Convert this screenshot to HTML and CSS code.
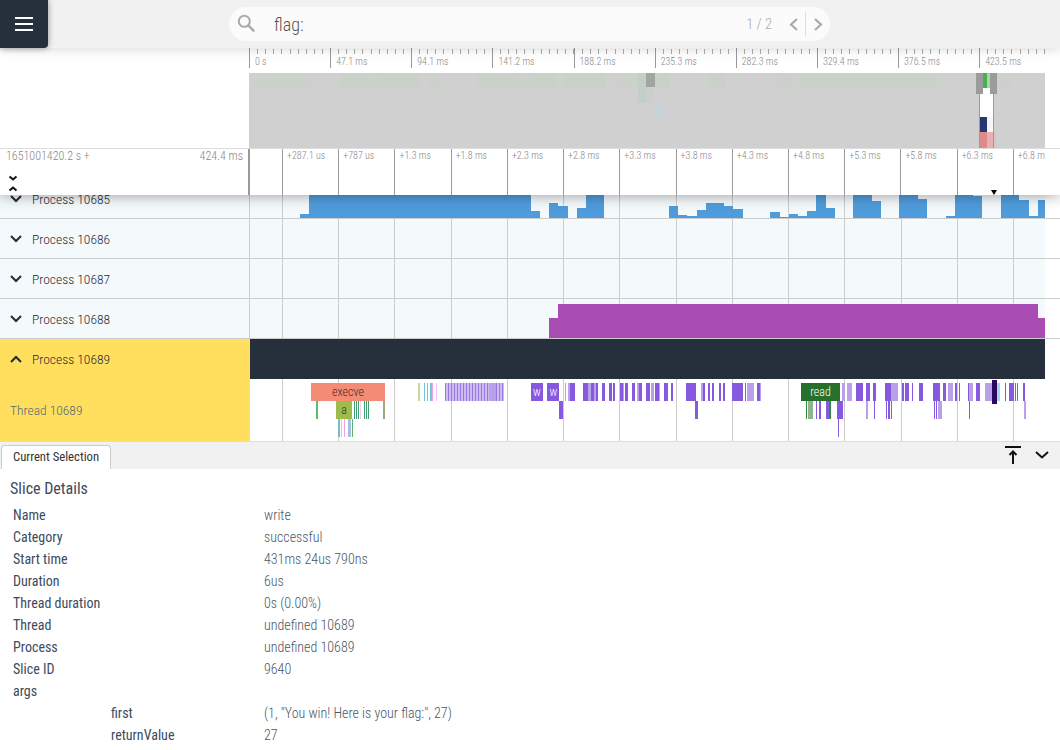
FILE: index.html
```html
<!DOCTYPE html>
<html lang="en">
<head>
	<meta charset="UTF-8">
	<title>Perfetto UI</title>
	<link rel="stylesheet" href="styles.css">
</head>
<body>
	<div class="topbar">
		<div class="menu-btn">
			<svg width="18" height="14" viewBox="0 0 18 14"><path d="M0 1h18M0 7h18M0 13h18" stroke="#fff" stroke-width="2"/></svg>
		</div>
		<div class="search">
			<svg class="search-icon" width="20" height="20" viewBox="0 0 20 20"><circle cx="7.300" cy="7.300" r="5.500" fill="none" stroke="#aaa" stroke-width="2"/><path d="M11.300 11.300l6 6" stroke="#aaa" stroke-width="2.400"/></svg>
			<span class="search-text">flag:</span>
			<span class="search-count">1 / 2</span>
			<svg class="search-nav" width="42" height="24" viewBox="0 0 42 24"><path d="M11 7l-6 5.500 6 5.500" fill="none" stroke="#aaa" stroke-width="2.200"/><path d="M19.500 0v24" stroke="#ddd"/><path d="M29 7l6 5.500-6 5.500" fill="none" stroke="#aaa" stroke-width="2.200"/></svg>
		</div>
	</div>

	<div class="overview">
		<div class="ruler">
			<div class="ruler-cell">0 s</div>
			<div class="ruler-cell">47.1 ms</div>
			<div class="ruler-cell">94.1 ms</div>
			<div class="ruler-cell">141.2 ms</div>
			<div class="ruler-cell">188.2 ms</div>
			<div class="ruler-cell">235.3 ms</div>
			<div class="ruler-cell">282.3 ms</div>
			<div class="ruler-cell">329.4 ms</div>
			<div class="ruler-cell">376.5 ms</div>
			<div class="ruler-cell">423.5 ms</div>
		</div>
		<div class="heat-row">
			<svg class="heat" width="796" height="75" viewBox="249 73 796 75">
				<rect x="249" y="73" width="796" height="75" fill="#d0d0d0"/>
				<g fill="#cdd1cc">
					<rect x="250" y="73" width="63" height="15"/>
					<rect x="370" y="73" width="9" height="15"/>
					<rect x="428" y="73" width="15" height="15"/>
					<rect x="517" y="73" width="13" height="15"/>
					<rect x="615" y="73" width="23" height="15"/>
					<rect x="735" y="73" width="8" height="15"/>
					<rect x="970" y="73" width="6" height="15"/>
					<rect x="997" y="73" width="15" height="15"/>
				</g>
				<g fill="#c9d1c8">
					<rect x="339" y="73" width="31" height="15"/>
					<rect x="379" y="73" width="41" height="15"/>
					<rect x="477" y="73" width="40" height="15"/>
					<rect x="530" y="73" width="27" height="15"/>
					<rect x="564" y="73" width="42" height="15"/>
					<rect x="655" y="73" width="15" height="15"/>
					<rect x="709" y="73" width="17" height="15"/>
					<rect x="777" y="73" width="15" height="15"/>
					<rect x="800" y="73" width="137" height="15"/>
				</g>
				<rect x="638" y="73" width="8" height="30" fill="#c2cfc6"/>
				<rect x="646" y="73" width="9" height="14" fill="#a1a79f"/>
				<rect x="646" y="88" width="8" height="15" fill="#ccd0cd"/>
				<rect x="655" y="103" width="8" height="15" fill="#c6d2d6"/>
				<rect x="980" y="88" width="13" height="60" fill="#fff"/>
				<rect x="983" y="73" width="4" height="15" fill="#46b153"/>
				<rect x="987" y="73" width="3" height="15" fill="#a3d9a8"/>
				<rect x="980" y="117" width="7" height="15" fill="#26386f"/>
				<rect x="987" y="117" width="6" height="15" fill="#f4f6fb"/>
				<rect x="980" y="132" width="7" height="16" fill="#de8b8b"/>
				<rect x="987" y="132" width="6" height="16" fill="#e8b0b0"/>
				<rect x="993" y="132" width="3" height="16" fill="#d8c4c4"/>
				<path d="M979.500 94v54M993.500 94v54" stroke="#9b9b9b"/>
				<rect x="976" y="73" width="7" height="21" fill="#9b9b9b"/>
				<rect x="990" y="73" width="7" height="21" fill="#9b9b9b"/>
			</svg>
		</div>
		<div class="axis">
			<div class="axis-left">
				<div class="axis-times"><span>1651001420.2 s +</span><span>424.4 ms</span></div>
				<svg class="collapse" width="10" height="18" viewBox="0 0 10 18"><path d="M1.500 1.500l3.500 3 3.500-3M1.500 15.500l3.500-3 3.500 3" fill="none" stroke="#111" stroke-width="2"/></svg>
			</div>
			<div class="axis-ticks">
				<div class="axis-gap"></div>
				<div class="axis-cell">+287.1 us</div>
				<div class="axis-cell">+787 us</div>
				<div class="axis-cell">+1.3 ms</div>
				<div class="axis-cell">+1.8 ms</div>
				<div class="axis-cell">+2.3 ms</div>
				<div class="axis-cell">+2.8 ms</div>
				<div class="axis-cell">+3.3 ms</div>
				<div class="axis-cell">+3.8 ms</div>
				<div class="axis-cell">+4.3 ms</div>
				<div class="axis-cell">+4.8 ms</div>
				<div class="axis-cell">+5.3 ms</div>
				<div class="axis-cell">+5.8 ms</div>
				<div class="axis-cell">+6.3 ms</div>
				<div class="axis-cell axis-last">+6.8 ms</div>
			</div>
			<div class="marker"></div>
		</div>
	</div>

	<div class="tracks">
		<div class="track track-first">
			<div class="shell">
				<svg class="chev" width="12" height="8" viewBox="0 0 12 8"><path d="M1 1l5 5 5-5" fill="none" stroke="#1f2a38" stroke-width="2"/></svg>
				<span>Process 10685</span>
			</div>
			<div class="lane">
				<svg class="lane-svg" width="796" height="39" viewBox="250 179 796 39">
					<path fill="#4f9cdc" d="M300 214h9v4h-9zM309 179h222v39h-222zM531 211h9v7h-9zM549 203h9v15h-9zM558 206h10v12h-10zM577 208h9v10h-9zM586 179h18v39h-18zM669 206h9v12h-9zM678 215h9v3h-9zM687 216h10v2h-10zM697 210h9v8h-9zM706 203h18v15h-18zM724 206h9v12h-9zM733 209h10v9h-10zM770 212h10v6h-10zM780 217h9v1h-9zM789 214h9v4h-9zM798 216h9v2h-9zM807 211h9v7h-9zM816 179h10v39h-10zM826 208h9v10h-9zM853 179h19v39h-19zM872 201h9v17h-9zM899 179h19v39h-19zM918 199h9v19h-9zM946 216h9v2h-9zM955 179h18v39h-18zM973 196h9v22h-9zM1001 179h18v39h-18zM1019 200h10v18h-10zM1029 216h9v2h-9zM1038 200h7v18h-7z"/>
				</svg>
			</div>
		</div>
		<div class="track">
			<div class="shell">
				<svg class="chev" width="12" height="8" viewBox="0 0 12 8"><path d="M1 1l5 5 5-5" fill="none" stroke="#1f2a38" stroke-width="2"/></svg>
				<span>Process 10686</span>
			</div>
			<div class="lane"></div>
		</div>
		<div class="track">
			<div class="shell">
				<svg class="chev" width="12" height="8" viewBox="0 0 12 8"><path d="M1 1l5 5 5-5" fill="none" stroke="#1f2a38" stroke-width="2"/></svg>
				<span>Process 10687</span>
			</div>
			<div class="lane"></div>
		</div>
		<div class="track">
			<div class="shell">
				<svg class="chev" width="12" height="8" viewBox="0 0 12 8"><path d="M1 1l5 5 5-5" fill="none" stroke="#1f2a38" stroke-width="2"/></svg>
				<span>Process 10688</span>
			</div>
			<div class="lane">
				<svg class="lane-svg" width="796" height="39" viewBox="250 299 796 39">
					<path fill="#a94db5" d="M549 318h9v20h-9zM558 304h480v34h-480zM1038 318h7v20h-7z"/>
				</svg>
			</div>
		</div>
		<div class="track track-open">
			<div class="shell">
				<svg class="chev" width="12" height="8" viewBox="0 0 12 8"><path d="M1 7l5-5 5 5" fill="none" stroke="#1f2a38" stroke-width="2"/></svg>
				<span>Process 10689</span>
			</div>
			<div class="lane lane-dark"></div>
		</div>
		<div class="track track-thread">
			<div class="shell">Thread 10689</div>
			<div class="lane lane-white">
				<svg class="lane-svg" width="796" height="62" viewBox="250 379 796 62">
					<defs>
						<pattern id="stripes" x="445" y="383" width="3" height="18" patternUnits="userSpaceOnUse">
							<rect width="3" height="18" fill="#cdbcf0"/>
							<rect width="1" height="18" fill="#9a76e4"/>
						</pattern>
					</defs>
					<rect x="311" y="383" width="74" height="18" fill="#f48b74"/>
					<rect x="336" y="401" width="16" height="18" fill="#9dbc4c"/>
					<path fill="#5cbd6c" d="M316 401h2v18h-2z"/>
					<path fill="#3f9d72" d="M354 401h1v18h-1zM356 401h1v18h-1zM358 401h1v18h-1zM364 401h1v18h-1zM366 401h1v18h-1zM368 401h1v18h-1z"/>
					<path fill="#f6c9f0" d="M360 401h1v18h-1zM436 383h1v18h-1z"/>
					<path fill="#a5a583" d="M383 401h2v18h-2z"/>
					<path fill="#7fb9c9" d="M338 419h2v18h-2z"/>
					<path fill="#b9d9ee" d="M341 419h1v18h-1z"/>
					<path fill="#f59fe9" d="M344 419h1v18h-1zM432 383h1v18h-1z"/>
					<path fill="#a2c3dc" d="M348 419h3v18h-3z"/>
					<path fill="#5faf73" d="M352 419h1v18h-1z"/>
					<path fill="#c5d89f" d="M418 383h2v18h-2z"/>
					<path fill="#6fc8d8" d="M424 383h1v18h-1zM427 383h1v18h-1zM430 383h2v18h-2z"/>
					<rect x="445" y="383" width="59" height="18" fill="url(#stripes)"/>
					<rect x="489" y="383" width="7" height="18" fill="#b9a0ea"/>
					<path fill="#b9a0ea" d="M565 383h1v18h-1zM568 383h2v18h-2zM588 383h3v18h-3zM594 383h2v18h-2zM613 383h2v18h-2zM623 383h1v18h-1zM637 383h2v18h-2zM651 383h3v18h-3zM659 383h1v18h-1zM701 383h2v18h-2zM747 383h7v18h-7zM759 383h2v18h-2zM842 383h3v18h-3zM847 383h5v18h-5zM891 383h7v18h-7zM948 383h5v18h-5zM968 383h5v18h-5zM985 383h7v18h-7zM1024 401h2v18h-2zM938 401h4v18h-4zM866 401h2v18h-2z"/>
					<path fill="#8759e0" d="M570 383h5v18h-5zM583 383h5v18h-5zM591 383h3v18h-3zM596 383h2v18h-2zM602 383h3v18h-3zM609 383h3v18h-3zM613 383h2v18h-2zM620 383h3v18h-3zM625 383h3v18h-3zM632 383h3v18h-3zM639 383h3v18h-3zM646 383h4v18h-4zM655 383h4v18h-4zM664 383h4v18h-4zM671 383h2v18h-2zM686 383h10v18h-10zM703 383h2v18h-2zM708 383h2v18h-2zM712 383h2v18h-2zM719 383h2v18h-2zM723 383h2v18h-2zM732 383h5v18h-5zM737 383h6v18h-6zM745 383h1v18h-1zM757 383h3v18h-3zM856 383h7v18h-7zM866 383h4v18h-4zM873 383h3v18h-3zM885 383h6v18h-6zM902 383h2v18h-2zM905 383h4v18h-4zM912 383h1v18h-1zM919 383h4v18h-4zM933 383h7v18h-7zM943 383h3v18h-3zM955 383h2v18h-2zM959 383h1v18h-1zM968 383h1v18h-1zM976 383h4v18h-4zM1009 383h5v18h-5zM1015 383h1v18h-1zM1017 383h1v18h-1zM1023 383h2v18h-2zM559 401h4v18h-4zM695 401h3v18h-3zM816 401h1v18h-1zM819 401h2v18h-2zM826 401h3v18h-3zM837 401h6v18h-6zM874 401h1v18h-1zM886 401h1v18h-1zM888 401h2v18h-2zM891 401h1v18h-1zM934 401h1v18h-1zM936 401h1v18h-1zM969 401h1v18h-1zM838 419h1v18h-1z"/>
					<rect x="531" y="383" width="12" height="18" fill="#8759e0"/>
					<rect x="547" y="383" width="12" height="18" fill="#8759e0"/>
					<rect x="801" y="383" width="39" height="18" fill="#266f2d"/>
					<path fill="#2e8b3f" d="M806 401h1v18h-1zM829 401h2v18h-2z"/>
					<path fill="#8db58e" d="M808 401h5v18h-5z"/>
					<rect x="992" y="380" width="5" height="24" fill="#2a0a5e"/>
					<rect x="997" y="383" width="3" height="18" fill="#a8d4f4"/>
					<rect x="1005" y="383" width="1" height="18" fill="#a8623c"/>
					<text class="slice-text slice-dark" x="348" y="396">execve</text>
					<text class="slice-text slice-dark" x="344" y="414">a</text>
					<text class="slice-text slice-light" x="537" y="396">w</text>
					<text class="slice-text slice-light" x="553.500" y="396">w</text>
					<text class="slice-text slice-light" x="820.500" y="396">read</text>
				</svg>
			</div>
		</div>
	</div>

	<div class="tabbar">
		<div class="tab">Current Selection</div>
		<svg class="tab-icon" width="18" height="18" viewBox="0 0 18 18"><path d="M1 1h16" stroke="#111" stroke-width="2"/><path d="M9 18V6" stroke="#111" stroke-width="2"/><path d="M5.500 9l3.500-3.500 3.500 3.500" fill="none" stroke="#111" stroke-width="2"/></svg>
		<svg class="tab-icon tab-last" width="14" height="8" viewBox="0 0 14 8"><path d="M1 1l6 5.500 6-5.500" fill="none" stroke="#111" stroke-width="2"/></svg>
	</div>

	<div class="details">
		<h2>Slice Details</h2>
		<div class="detail-row"><span class="key">Name</span><span class="val">write</span></div>
		<div class="detail-row"><span class="key">Category</span><span class="val">successful</span></div>
		<div class="detail-row"><span class="key">Start time</span><span class="val">431ms 24us 790ns</span></div>
		<div class="detail-row"><span class="key">Duration</span><span class="val">6us</span></div>
		<div class="detail-row"><span class="key">Thread duration</span><span class="val">0s (0.00%)</span></div>
		<div class="detail-row"><span class="key">Thread</span><span class="val">undefined 10689</span></div>
		<div class="detail-row"><span class="key">Process</span><span class="val">undefined 10689</span></div>
		<div class="detail-row"><span class="key">Slice ID</span><span class="val">9640</span></div>
		<div class="detail-row"><span class="key">args</span></div>
		<div class="detail-row"><span class="key key-sub">first</span><span class="val">(1, "You win! Here is your flag:", 27)</span></div>
		<div class="detail-row"><span class="key key-sub">returnValue</span><span class="val">27</span></div>
	</div>
</body>
</html>
```

FILE: styles.css
```css
*{
	margin:0;
	padding:0;
	box-sizing:border-box;
}
html,body{
	width:1060px;
	height:750px;
	overflow:hidden;
}
body{
	font-family:"Roboto Condensed","Roboto","Liberation Sans",sans-serif;
	font-stretch:75%;
	font-weight:300;
	background:#fff;
	color:#3c4b5d;
}
svg{
	display:block;
}

/* top bar */
.topbar{
	position:relative;
	z-index:3;
	display:flex;
	height:48px;
	background:#f1f1f1;
	box-shadow:0 0 12px rgba(0,0,0,.18);
}
.menu-btn{
	display:flex;
	align-items:center;
	justify-content:center;
	width:48px;
	height:48px;
	background:#262f3c;
	border-bottom-right-radius:4px;
	box-shadow:0 0 6px rgba(0,0,0,.4);
}
.search{
	display:flex;
	align-items:center;
	width:601px;
	height:34px;
	margin:7px 0 0 181px;
	padding:0 8px;
	background:#fbfbfb;
	border-radius:17px;
}
.search-text{
	margin-left:17px;
	font-size:18px;
	color:#555;
}
.search-count{
	margin-left:auto;
	font-size:14.5px;
	color:#aaa;
}
.search-nav{
	margin-left:14px;
	margin-right:-6px;
}

/* overview */
.overview{
	position:relative;
	z-index:2;
	height:147px;
	background:#fff;
	box-shadow:0 0 14px rgba(0,0,0,.4);
}
.ruler{
	display:flex;
	height:25px;
	padding-left:249px;
}
.ruler-cell{
	flex:0 0 81.14px;
	height:20px;
	padding:8px 0 0 5px;
	border-left:1px solid #999;
	font-size:10px;
	line-height:12px;
	color:#888;
	background-image:repeating-linear-gradient(90deg,transparent 0,transparent 7.11px,#aaa 7.11px,#aaa 8.11px);
	background-size:100% 5px;
	background-position:0 1px;
	background-repeat:no-repeat;
}
.ruler-cell:last-child{
	flex-basis:66px;
}
.heat-row{
	height:75px;
	padding-left:249px;
}
.axis{
	display:flex;
	height:47px;
	border-top:1px solid #ddd;
}
.axis-left{
	flex:0 0 250px;
	border-right:2px solid #999;
	padding:0 5px 0 6px;
}
.axis-times{
	display:flex;
	justify-content:space-between;
	font-size:12px;
	line-height:14px;
	color:#888;
}
.collapse{
	margin:12px 0 0 2px;
}
.axis-ticks{
	display:flex;
	flex:1;
	overflow:hidden;
	max-width:796px;
}
.axis-gap{
	flex:0 0 32px;
}
.axis-cell{
	flex:0 0 56.23px;
	padding:0 0 0 4px;
	border-left:1px solid #999;
	font-size:10px;
	line-height:13px;
	color:#888;
	white-space:nowrap;
}
.axis-last{
	overflow:hidden;
	flex-basis:32px;
}
.marker{
	position:absolute;
	left:991px;
	bottom:0;
	width:0;
	height:0;
	border-left:3px solid transparent;
	border-right:3px solid transparent;
	border-top:5px solid #000;
}

/* tracks */
.tracks{
	height:246px;
	overflow:hidden;
}
.track{
	display:flex;
	height:40px;
	border-bottom:1px solid #ccc;
	font-size:13.5px;
}
.track-first{
	margin-top:-16px;
}
.shell{
	display:flex;
	align-items:center;
	flex:0 0 250px;
	padding-left:10px;
	background:#f4f9fc;
	border-right:1px solid #ccc;
	color:#1f2a38;
}
.chev{
	margin-right:10px;
}
.lane{
	width:795px;
	background-color:#f4f9fc;
	background-image:repeating-linear-gradient(90deg,#ccc 0,#ccc 1px,transparent 1px,transparent 56.23px);
	background-position:32px 0;
	background-size:calc(100% - 32px) 100%;
	background-repeat:no-repeat;
}
.lane-svg{
	overflow:visible;
}
.track-open{
	border-bottom:none;
}
.track-open .shell{
	background:#ffdf5d;
	border-right:none;
}
.lane-dark{
	background:#262f3c;
}
.track-thread{
	height:62px;
	border-bottom:none;
}
.track-thread .shell{
	background:#ffdf5d;
	border-right:1px solid #ddd;
	color:#55697a;
}
.lane-white{
	background-color:#fff;
}
.slice-text{
	font-size:12px;
	text-anchor:middle;
}
.slice-dark{
	fill:#333;
}
.slice-light{
	fill:#fff;
}

/* bottom panel */
.tabbar{
	display:flex;
	align-items:flex-end;
	height:28px;
	padding-left:1px;
	background:#f1f1f1;
	border-top:1px solid #ddd;
}
.tab{
	width:110px;
	height:24px;
	padding-top:3px;
	background:#fff;
	border:1px solid #ccc;
	border-bottom:none;
	border-radius:4px 4px 0 0;
	font-size:12.7px;
	font-weight:400;
	line-height:16px;
	text-align:center;
	color:#333;
}
.tab-icon{
	margin:0 0 5px auto;
}
.tab-last{
	margin:0 11px 10px 13px;
}
.details{
	padding:10px 10px 0;
}
.details h2{
	font-size:16px;
	line-height:19px;
	font-weight:400;
	margin-bottom:6px;
}
.detail-row{
	display:flex;
	height:22px;
	padding-left:3px;
	font-size:14px;
	line-height:22px;
}
.key{
	flex:0 0 251px;
	font-weight:400;
}
.key-sub{
	padding-left:98px;
}
.val{
	color:#4a5665;
}
```
